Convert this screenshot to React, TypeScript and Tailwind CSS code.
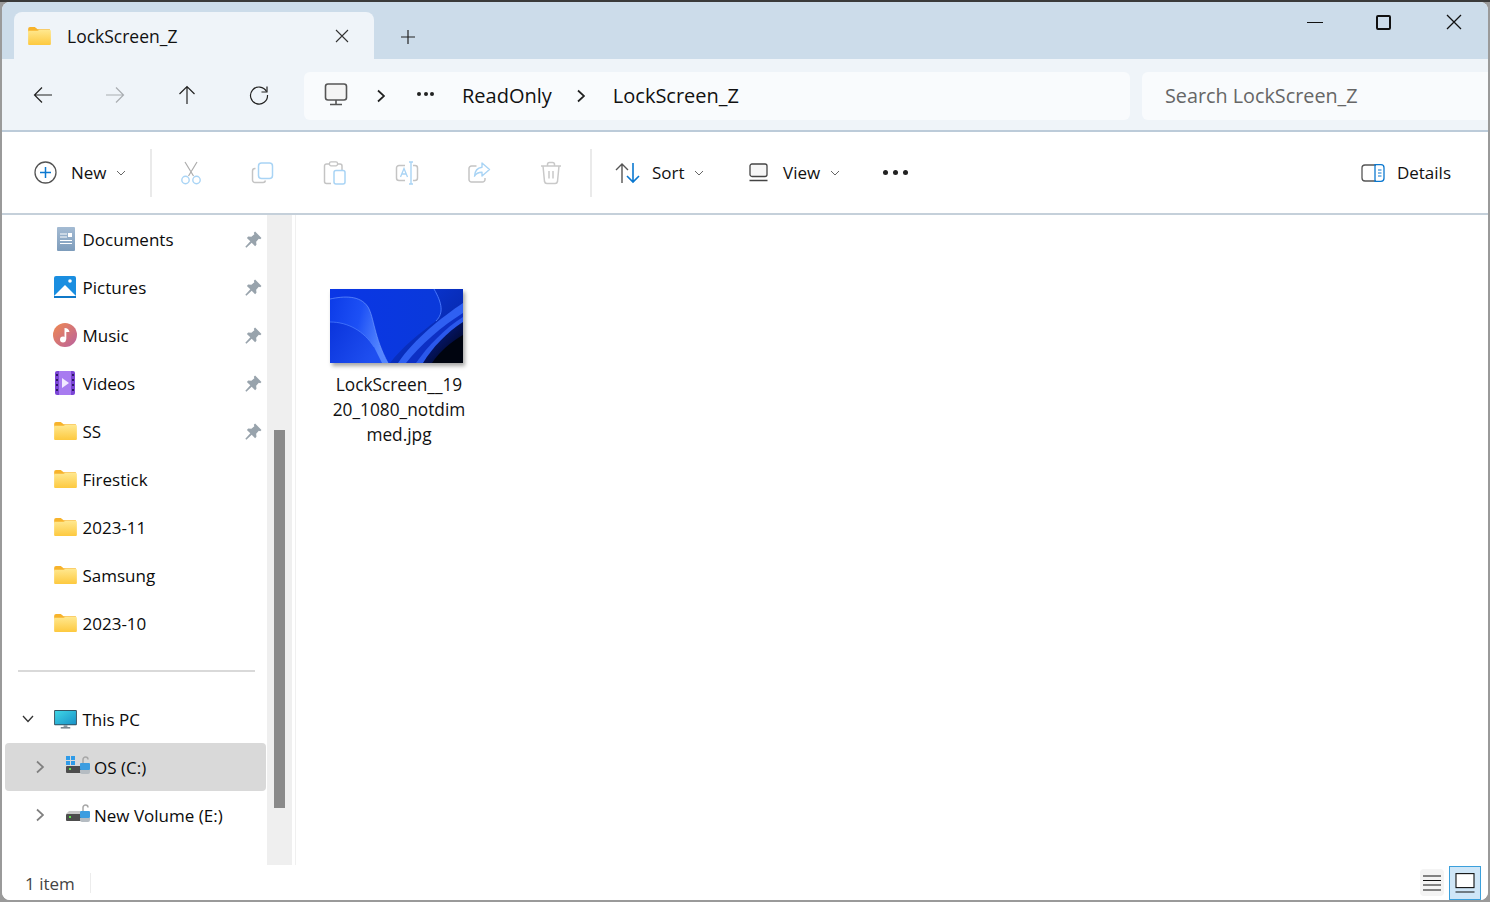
import { type ReactNode } from "react";

const GRAY = "#8a8a8a";
const LIGHT = "#a9d4f5";

function Svg({ size = 24, children, className = "" }: { size?: number; children: ReactNode; className?: string }) {
  return (
    <svg width={size} height={size} viewBox="0 0 24 24" fill="none" className={`shrink-0 ${className}`}>
      {children}
    </svg>
  );
}

function Folder({ w = 23, h = 18, className = "" }: { w?: number; h?: number; className?: string }) {
  return (
    <svg width={w} height={h} viewBox="0 0 24 19" className={`shrink-0 ${className}`}>
      <defs>
        <linearGradient id="fld" x1="0" y1="0" x2="0" y2="1">
          <stop offset="0" stopColor="#ffe88f" />
          <stop offset="1" stopColor="#fdc93f" />
        </linearGradient>
      </defs>
      <path d="M0 2q0-2 2-2h5l3 2.500h13v3H0z" fill="#f7b32b" />
      <path d="M0 4h10l2-1h10.500q1.500 0 1.500 1.500V18q0 1-1 1H1q-1 0-1-1z" fill="url(#fld)" />
    </svg>
  );
}

function Chevron({ className = "" }: { className?: string }) {
  return (
    <svg width="10" height="6" viewBox="0 0 10 6" fill="none" className={`shrink-0 ${className}`}>
      <path d="M1 1l4 4 4-4" stroke="#666" strokeWidth="1" />
    </svg>
  );
}

function NavRight({ color = "#222" }: { color?: string }) {
  return (
    <svg width="10" height="14" viewBox="0 0 10 14" fill="none" className="shrink-0">
      <path d="M2 1.500L8 7l-6 5.500" stroke={color} strokeWidth="1.700" />
    </svg>
  );
}

function Pin() {
  return (
    <svg width="17" height="17" viewBox="0 0 16 16" className="shrink-0">
      <path d="M9.500 0.500L15.500 6.500 14.300 7.700 13 7.200 10.500 10 10.800 13 9.500 14.300 6.300 11 1.300 15.800 0.300 14.800 5 9.700 1.800 6.500 3 5.200 6 5.500 8.800 3 8.300 1.700z" fill="#98a3ac" />
    </svg>
  );
}

function DriveBody({ win }: { win: boolean }) {
  return (
    <svg width="24" height="20" viewBox="0 0 24 20" className="shrink-0">
      {win ? (
        <g fill="#2f9be8">
          <rect x="0" y="0" width="4" height="4" />
          <rect x="5" y="0" width="4" height="4" />
          <rect x="0" y="5" width="4" height="4" />
          <rect x="5" y="5" width="4" height="4" />
        </g>
      ) : (
        <path d="M3 7h11v3H0z" fill="#c8c8c8" />
      )}
      <rect x="0" y="10" width="15" height="7" rx="1" fill="#4d4d4d" />
      <rect x="3" y="12" width="2" height="2" fill="#5fe34f" />
      <path d="M17 7V3.500a2.500 2.500 0 0 1 5 0" fill="none" stroke="#a8a8a8" strokeWidth="1.500" />
      <rect x="14" y="7" width="10" height="7" rx="1" fill="#3d9de0" />
      <path d="M14 14h10v2a2 2 0 0 1-2 2h-6a2 2 0 0 1-2-2z" fill="#b5bcc2" />
    </svg>
  );
}

const quickAccess: { label: string; icon: ReactNode }[] = [
  {
    label: "Documents",
    icon: (
      <svg width="18" height="24" viewBox="0 0 18 24" className="ml-[4px] shrink-0">
        <defs>
          <linearGradient id="doc" x1="0" y1="0" x2="0" y2="1">
            <stop offset="0" stopColor="#a4bbd3" />
            <stop offset="1" stopColor="#7d9cbb" />
          </linearGradient>
        </defs>
        <rect width="18" height="24" rx="1" fill="url(#doc)" />
        <path d="M3 7h7M3 10h7M3 13.500h12M3 16.500h12" stroke="#fff" strokeWidth="1" />
        <rect x="11" y="6" width="4" height="4" fill="#fff" />
      </svg>
    ),
  },
  {
    label: "Pictures",
    icon: (
      <svg width="22" height="22" viewBox="0 0 22 22" className="ml-[1px] shrink-0">
        <rect width="22" height="22" rx="2" fill="#1a8ee0" />
        <circle cx="16" cy="5" r="1.800" fill="#fff" />
        <path d="M0 20L11 9l11 11v1H0z" fill="#fff" />
        <path d="M0 20h22v2H0z" fill="#0f78c8" />
      </svg>
    ),
  },
  {
    label: "Music",
    icon: (
      <svg width="24" height="24" viewBox="0 0 24 24" className="shrink-0">
        <defs>
          <linearGradient id="mus" x1="0" y1="0" x2="1" y2="1">
            <stop offset="0" stopColor="#f0894f" />
            <stop offset="1" stopColor="#b9619f" />
          </linearGradient>
        </defs>
        <circle cx="12" cy="12" r="12" fill="url(#mus)" />
        <circle cx="10" cy="16.500" r="3" fill="#fff" />
        <path d="M11.500 16.500V5c3 0 4.500 1.500 5 4h-3.200v7.500z" fill="#fff" />
      </svg>
    ),
  },
  {
    label: "Videos",
    icon: (
      <svg width="20" height="24" viewBox="0 0 20 24" className="ml-[2px] shrink-0">
        <rect width="20" height="24" rx="2" fill="#7b45d6" />
        <path d="M4 0h12v24H4z" fill="#a87bf0" />
        <path d="M7 7l7 5-7 5z" fill="#f1e9ff" />
        <g fill="#2f1a66">
          <rect x="1" y="3" width="2" height="2" />
          <rect x="1" y="8" width="2" height="2" />
          <rect x="1" y="13" width="2" height="2" />
          <rect x="1" y="18" width="2" height="2" />
          <rect x="17" y="3" width="2" height="2" />
          <rect x="17" y="8" width="2" height="2" />
          <rect x="17" y="13" width="2" height="2" />
          <rect x="17" y="18" width="2" height="2" />
        </g>
      </svg>
    ),
  },
];

const folders = [
  { label: "SS", pin: true },
  { label: "Firestick", pin: false },
  { label: "2023-11", pin: false },
  { label: "Samsung", pin: false },
  { label: "2023-10", pin: false },
];

function SidebarRow({ icon, label, pin }: { icon: ReactNode; label: string; pin: boolean }) {
  return (
    <div className="flex h-12 items-center pl-[51px]">
      <div className="flex w-[29.500px] shrink-0 items-center">{icon}</div>
      <span className="mt-[2px] flex-1">{label}</span>
      {pin && (
        <span className="mr-[5px]">
          <Pin />
        </span>
      )}
    </div>
  );
}

function Tool({ children }: { children: ReactNode }) {
  return <div className="flex w-[72px] shrink-0 justify-center">{children}</div>;
}

function Thumbnail() {
  return (
    <svg width="133" height="74" viewBox="0 0 133 74" className="shadow-[2px_3px_4px_rgba(0,0,0,0.35)]">
      <defs>
        <linearGradient id="wbg" x1="0" y1="0" x2="1" y2="0">
          <stop offset="0" stopColor="#0a36e6" />
          <stop offset="1" stopColor="#0a3ad8" />
        </linearGradient>
        <linearGradient id="wlobe" x1="0" y1="0" x2="1" y2="0.300">
          <stop offset="0" stopColor="#0c3be8" />
          <stop offset="0.550" stopColor="#1d50f5" />
          <stop offset="1" stopColor="#5486ff" />
        </linearGradient>
        <linearGradient id="wlow" x1="0" y1="0" x2="1" y2="0.500">
          <stop offset="0" stopColor="#0a34dc" />
          <stop offset="1" stopColor="#1f4ff0" />
        </linearGradient>
        <linearGradient id="wdk" x1="0" y1="0" x2="1" y2="1">
          <stop offset="0" stopColor="#0722a8" />
          <stop offset="1" stopColor="#000208" />
        </linearGradient>
        <linearGradient id="wtop" x1="0" y1="0" x2="1" y2="1">
          <stop offset="0" stopColor="#0a3ae0" />
          <stop offset="1" stopColor="#06229a" />
        </linearGradient>
      </defs>
      <rect width="133" height="74" fill="url(#wbg)" />
      <path d="M0 10C14 7 30 6 38 18c6 10 6 30 20 56H0z" fill="url(#wlobe)" />
      <path d="M0 33c18 0 34 9 44 25l8 16H0z" fill="url(#wlow)" />
      <path d="M0 33c18 0 34 9 44 25" fill="none" stroke="#4f80ff" strokeWidth="0.700" />
      <path d="M0 10C14 7 30 6 38 18c6 10 6 30 20 56" fill="none" stroke="#7aa2ff" strokeWidth="0.600" />
      <path d="M104 0c8 14 10 24 2 32C90 44 72 58 60 74h73V0z" fill="url(#wtop)" />
      <path d="M104 0c8 14 10 24 2 32" fill="none" stroke="#4d7dff" strokeWidth="0.900" />
      <path d="M133 14c-21 14-49 36-65 60h65z" fill="#2f60f2" />
      <path d="M133 24c-21 13-43 32-57 50h57z" fill="#0d30c4" />
      <path d="M133 28c-18 11-36 30-47 46h47z" fill="#2a58ec" />
      <path d="M133 33c-16 10-31 26-40 41h40z" fill="url(#wdk)" />
      <path d="M133 46c-12 7-24 17-31 28h31z" fill="#00040f" />
    </svg>
  );
}

export default function App() {
  return (
    <div
      className="h-[902px] w-[1490px] overflow-hidden border-t-2 border-[#3a3a3a] bg-[#9a9a9a] px-[2px] pb-[2px] text-[17px] text-[#111]"
      style={{ fontFamily: '"Open Sans", "Noto Sans", sans-serif' }}
    >
      <div className="flex h-[898px] flex-col overflow-hidden rounded-lg bg-white">
        {/* title bar with tab */}
        <div className="flex h-[57px] shrink-0 items-end bg-[#ccdcea]">
          <div className="ml-3 flex h-[47px] w-[360px] items-center rounded-t-lg bg-[#eff4f9] pl-[14px]">
            <Folder w={23} h={18} />
            <span className="ml-[16px] mt-[2px] flex-1 text-[17.500px]">LockScreen_Z</span>
            <svg width="14" height="14" viewBox="0 0 14 14" className="mr-[25px]" fill="none">
              <path d="M1 1l12 12M13 1L1 13" stroke="#333" strokeWidth="1.100" />
            </svg>
          </div>
          <div className="mb-[14px] ml-[26px] flex">
            <svg width="16" height="16" viewBox="0 0 16 16" fill="none">
              <path d="M8 1v14M1 8h14" stroke="#222" strokeWidth="1.200" />
            </svg>
          </div>
          <div className="mb-[29px] ml-auto flex items-center gap-[53px] pr-[26px]">
            <div className="h-px w-[16px] bg-[#111]" />
            <div className="h-[15px] w-[15px] rounded-[2px] border-2 border-[#111]" />
            <svg width="16" height="16" viewBox="0 0 16 16" fill="none" className="ml-[2px]">
              <path d="M1 1l14 14M15 1L1 15" stroke="#111" strokeWidth="1.300" />
            </svg>
          </div>
        </div>

        {/* navigation row */}
        <div className="flex h-[73px] shrink-0 items-center border-b-2 border-[#bccbd9] bg-[#eff4f9] pt-[3px]">
          <div className="mb-[2px] ml-[5px] flex">
            <Tool>
              <Svg>
                <path d="M21 12H4M11 4.500L3.500 12l7.500 7.500" stroke="#222" strokeWidth="1.200" />
              </Svg>
            </Tool>
            <Tool>
              <Svg>
                <path d="M3 12h17M13 4.500l7.500 7.500-7.500 7.500" stroke="#a9adb1" strokeWidth="1.200" />
              </Svg>
            </Tool>
            <Tool>
              <Svg>
                <path d="M12 21V4M4.500 11L12 3.500l7.500 7.500" stroke="#222" strokeWidth="1.200" />
              </Svg>
            </Tool>
            <Tool>
              <Svg>
                <path d="M19.500 8.500A8.500 8.500 0 1 0 20.500 12" stroke="#222" strokeWidth="1.200" />
                <path d="M20 3.500v5.500h-5.500" stroke="#222" strokeWidth="1.200" />
              </Svg>
            </Tool>
          </div>
          <div className="ml-[9px] flex h-12 w-[826px] items-center rounded-md bg-[#f9fbfd] text-[20px]">
            <svg width="24" height="24" viewBox="0 0 24 24" fill="none" className="mb-[2px] ml-[20px] shrink-0">
              <rect x="1.500" y="1" width="21" height="16" rx="2.500" stroke="#555" strokeWidth="1.600" fill="#f4f4f4" />
              <path d="M12 17v4M6 21.500h12" stroke="#555" strokeWidth="1.600" />
            </svg>
            <span className="ml-[28px]">
              <NavRight />
            </span>
            <span className="mb-[4px] ml-[31px] flex gap-[2.500px]">
              <i className="h-1 w-1 rounded-full bg-[#222]" />
              <i className="h-1 w-1 rounded-full bg-[#222]" />
              <i className="h-1 w-1 rounded-full bg-[#222]" />
            </span>
            <span className="ml-[28px]">ReadOnly</span>
            <span className="ml-[24px]">
              <NavRight />
            </span>
            <span className="ml-[27px]">LockScreen_Z</span>
          </div>
          <div className="ml-3 flex h-12 flex-1 items-center rounded-l-md bg-[#f9fbfd] pl-[23px] text-[19.800px] text-[#666]">
            Search LockScreen_Z
          </div>
        </div>

        {/* command bar */}
        <div className="flex h-[83px] shrink-0 items-center border-b-2 border-[#c5d0da]">
          <div className="ml-[32px] flex w-[116px] shrink-0 items-center">
            <svg width="23" height="23" viewBox="0 0 23 23" fill="none" className="shrink-0">
              <circle cx="11.500" cy="11.500" r="10.500" stroke="#555" strokeWidth="1.300" />
              <path d="M11.500 6v11M6 11.500h11" stroke="#0b78d0" strokeWidth="1.500" />
            </svg>
            <span className="ml-[14px]">New</span>
            <Chevron className="ml-[9px]" />
          </div>
          <div className="h-12 w-[2px] bg-[#eaeaea]" />
          <div className="ml-[3px] flex">
            <Tool>
              <Svg>
                <path d="M6 1l8.500 14M18 1L9.500 15" stroke={GRAY} strokeWidth="1.200" opacity="0.7" />
                <circle cx="6.500" cy="19" r="3.700" stroke={LIGHT} strokeWidth="1.400" />
                <circle cx="17.500" cy="19" r="3.700" stroke={LIGHT} strokeWidth="1.400" />
              </Svg>
            </Tool>
            <Tool>
              <Svg>
                <path d="M4.500 7.500h-.5A2.500 2.500 0 0 0 1.500 10v9A2.500 2.500 0 0 0 4 21.500h8a2.500 2.500 0 0 0 2.500-2" stroke="#c4c4c4" strokeWidth="1.500" />
                <rect x="7.500" y="2" width="14" height="15.500" rx="3" stroke={LIGHT} strokeWidth="1.500" />
              </Svg>
            </Tool>
            <Tool>
              <Svg>
                <path d="M8 22.500H3.500A2 2 0 0 1 1.500 20.500V5A2 2 0 0 1 3.500 3H17A2 2 0 0 1 19 5v4" stroke="#c4c4c4" strokeWidth="1.500" />
                <rect x="6.500" y="0.800" width="8" height="4" rx="1.500" stroke="#c4c4c4" strokeWidth="1.300" fill="#fff" />
                <rect x="11" y="9.500" width="11" height="13.500" rx="2" stroke={LIGHT} strokeWidth="1.500" />
              </Svg>
            </Tool>
            <Tool>
              <Svg>
                <path d="M10 4.500H4A2.500 2.500 0 0 0 1.500 7v10A2.500 2.500 0 0 0 4 19.500h6M18 4.500h2A2.500 2.500 0 0 1 22.500 7v10a2.500 2.500 0 0 1-2.500 2.500h-2" stroke="#c4c4c4" strokeWidth="1.500" />
                <path d="M5.500 16l3.500-8.500 3.500 8.500M6.700 13h4.600" stroke={LIGHT} strokeWidth="1.300" />
                <path d="M14 1h4M14 23h4M16 1v22" stroke={LIGHT} strokeWidth="1.400" />
              </Svg>
            </Tool>
            <Tool>
              <Svg>
                <path d="M9.500 5H4.500A2.500 2.500 0 0 0 2 7.500v11A2.500 2.500 0 0 0 4.500 21h11a2.500 2.500 0 0 0 2.500-2.500V17" stroke="#c4c4c4" strokeWidth="1.500" />
                <path d="M15 2l7.500 6.500-7.500 6.500v-3.800c-3.500 0-6 1.200-7.500 4 .3-5 3-8.500 7.500-9z" stroke={LIGHT} strokeWidth="1.400" strokeLinejoin="round" />
              </Svg>
            </Tool>
            <Tool>
              <Svg>
                <path d="M2 5h20M8.500 5V3.500a2 2 0 0 1 2-2h3a2 2 0 0 1 2 2V5M4 5l1.500 15.500a2.500 2.500 0 0 0 2.500 2h8a2.500 2.500 0 0 0 2.500-2L20 5M10 10v7.500M14 10v7.500" stroke="#c9c9c9" strokeWidth="1.500" />
              </Svg>
            </Tool>
          </div>
          <div className="ml-[3px] h-12 w-[2px] bg-[#eaeaea]" />
          <div className="ml-[23px] flex w-[134px] shrink-0 items-center">
            <svg width="26" height="22" viewBox="0 0 26 22" fill="none" className="shrink-0">
              <path d="M7 21V2M1 8l6-6 6 6" stroke="#555" strokeWidth="1.400" />
              <path d="M18 1v19M12 14l6 6 6-6" stroke="#0b78d0" strokeWidth="1.600" />
            </svg>
            <span className="ml-[11px]">Sort</span>
            <Chevron className="ml-[9px]" />
          </div>
          <div className="flex w-[134px] shrink-0 items-center">
            <svg width="19" height="19" viewBox="0 0 19 19" fill="none" className="shrink-0">
              <rect x="1" y="1" width="17" height="12.500" rx="2" stroke="#444" strokeWidth="1.300" fill="#f6f6f6" />
              <path d="M0.500 17.500h18" stroke="#444" strokeWidth="1.400" />
            </svg>
            <span className="ml-[15px]">View</span>
            <Chevron className="ml-[10px]" />
          </div>
          <div className="flex gap-[5px]">
            <i className="h-[5px] w-[5px] rounded-full bg-[#222]" />
            <i className="h-[5px] w-[5px] rounded-full bg-[#222]" />
            <i className="h-[5px] w-[5px] rounded-full bg-[#222]" />
          </div>
          <div className="ml-auto mr-[37px] flex items-center">
            <svg width="24" height="18" viewBox="0 0 24 18" fill="none" className="shrink-0">
              <path d="M15 1H4a3 3 0 0 0-3 3v10a3 3 0 0 0 3 3h11" stroke="#555" strokeWidth="1.300" />
              <path d="M14 .700h6a3 3 0 0 1 3 3v10.600a3 3 0 0 1-3 3h-6z" stroke="#0b78d0" strokeWidth="1.300" />
              <path d="M17 6h3.500M17 9h3.500M17 12h3.500" stroke="#0b78d0" strokeWidth="1.100" />
            </svg>
            <span className="ml-[12px]">Details</span>
          </div>
        </div>

        {/* sidebar + file area */}
        <div className="flex min-h-0 flex-1">
          <div className="w-[265px] shrink-0 text-[#0b0b0b]">
            {quickAccess.map((item) => (
              <SidebarRow key={item.label} icon={item.icon} label={item.label} pin />
            ))}
            {folders.map((f) => (
              <SidebarRow key={f.label} icon={<Folder className="ml-[1px]" />} label={f.label} pin={f.pin} />
            ))}
            <div className="flex h-12 items-center pl-4 pr-3">
              <div className="h-[2px] w-[237px] bg-[#d9d9d9]" />
            </div>
            <div className="flex h-12 items-center pl-[20px]">
              <svg width="12" height="8" viewBox="0 0 12 8" fill="none" className="shrink-0">
                <path d="M1 1l5 5.500L11 1" stroke="#333" strokeWidth="1.300" />
              </svg>
              <svg width="23" height="19" viewBox="0 0 24 20" className="ml-[20px] shrink-0">
                <defs>
                  <linearGradient id="pc" x1="0" y1="0" x2="1" y2="1">
                    <stop offset="0" stopColor="#3fd6e6" />
                    <stop offset="1" stopColor="#1a93c8" />
                  </linearGradient>
                </defs>
                <rect width="24" height="16" rx="1" fill="#33505f" />
                <rect x="1" y="1" width="22" height="14" fill="url(#pc)" />
                <rect x="10" y="16" width="4" height="2" fill="#8a9aa4" />
                <rect x="7" y="18" width="10" height="1.500" fill="#6c7a84" />
              </svg>
              <span className="ml-[5.500px] mt-[2px]">This PC</span>
            </div>
            <div className="ml-[3px] flex h-12 w-[261px] items-center rounded-sm bg-[#d9d9d9] pl-[30px]">
              <NavRight color="#808080" />
              <span className="mb-[3px] ml-[21px]">
                <DriveBody win />
              </span>
              <span className="ml-[4px] mt-[2px]">OS (C:)</span>
            </div>
            <div className="ml-[3px] flex h-12 items-center pl-[30px]">
              <NavRight color="#808080" />
              <span className="mb-[3px] ml-[21px]">
                <DriveBody win={false} />
              </span>
              <span className="ml-[4px] mt-[2px]">New Volume (E:)</span>
            </div>
          </div>

          {/* nav pane scrollbar */}
          <div className="flex w-[25px] shrink-0 justify-center bg-[#efefef] pt-[215px]">
            <div className="h-[378px] w-[11px] bg-[#8a8a8a]" />
          </div>

          <div className="ml-[3px] flex-1 border-l border-[#f0f0f0] pl-[33px] pt-[74px]">
            <div className="w-[140px] text-center text-[17.300px] leading-[25px]">
              <div className="ml-[1px]">
                <Thumbnail />
              </div>
              <div className="mt-[9px]">
                <div>LockScreen__19</div>
                <div>20_1080_notdim</div>
                <div>med.jpg</div>
              </div>
            </div>
          </div>
        </div>

        {/* status bar */}
        <div className="flex h-[35px] shrink-0 items-center bg-white pl-[23px] text-[#444]">
          <span className="mt-[2px]">1 item</span>
          <div className="ml-[15px] h-5 w-[1px] bg-[#ececec]" />
          <div className="ml-auto flex h-full items-center">
            <div className="flex h-[27px] w-[24px] items-center justify-center rounded-sm bg-[#f4f4f4]">
              <svg width="18" height="16" viewBox="0 0 18 16" fill="none">
                <path d="M0 1h18M0 5.500h18M0 10h18M0 15h18" stroke="#111" strokeWidth="1.100" />
              </svg>
            </div>
            <div className="ml-[5px] mr-[7px] flex h-[34px] w-[32px] items-center justify-center border border-[#3ba0dc] bg-[#cfe6f7]">
              <svg width="20" height="20" viewBox="0 0 20 20" fill="none">
                <rect x="1" y="0.600" width="18" height="14" stroke="#111" strokeWidth="1.100" fill="#fff" />
                <path d="M0.500 19h19" stroke="#111" strokeWidth="1.100" />
              </svg>
            </div>
          </div>
        </div>
      </div>
    </div>
  );
}
